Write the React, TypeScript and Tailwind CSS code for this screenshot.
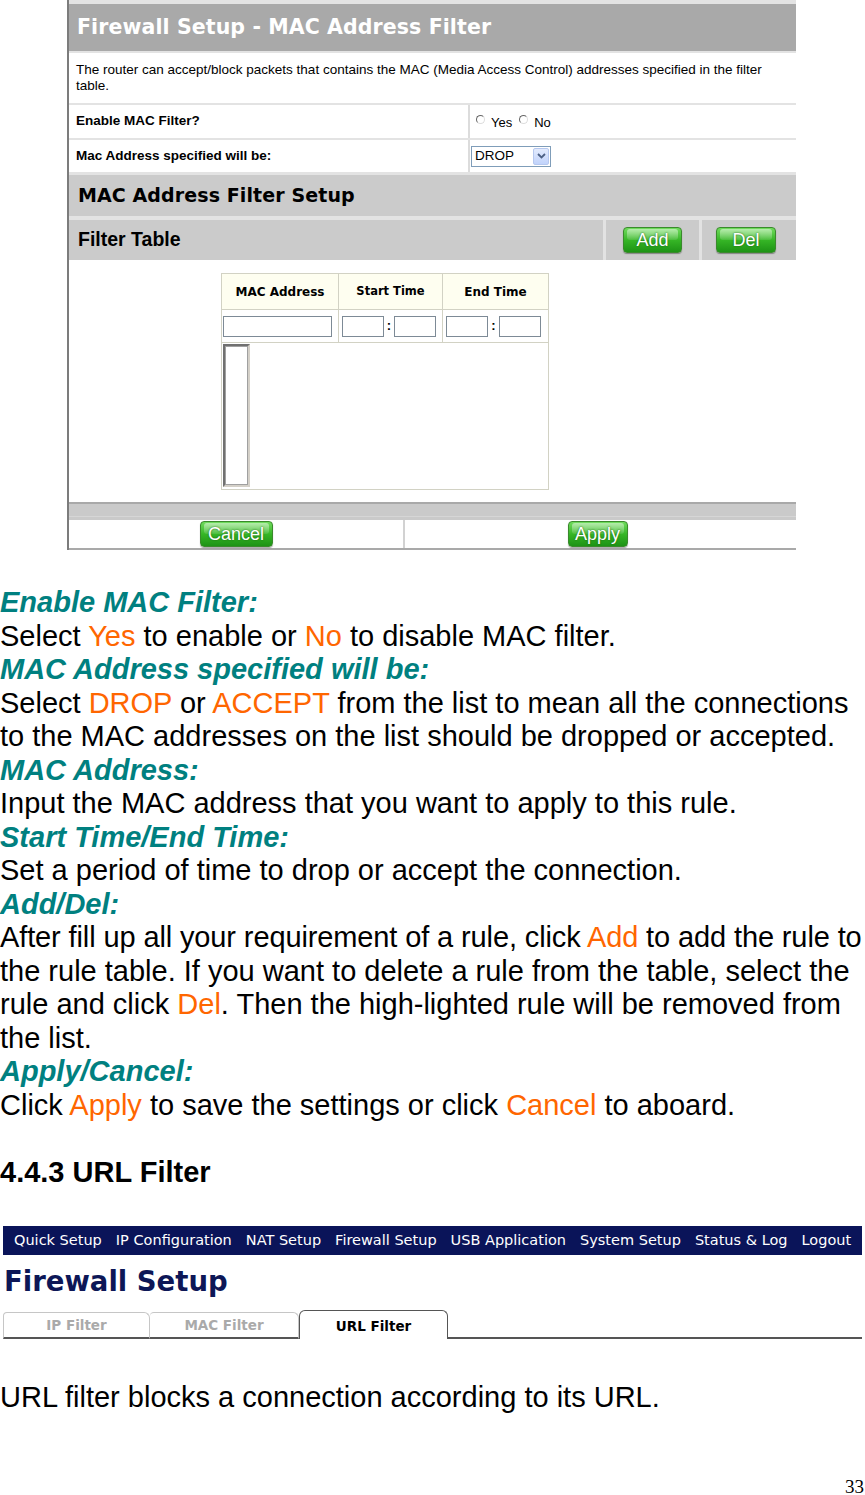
import React from 'react';

const sans = "font-['Liberation_Sans',Arial,sans-serif]";
const verdana = "font-['DejaVu_Sans',Verdana,sans-serif]";

function GreenButton({ label, width }: { label: string; width: string }) {
  return (
    <span
      className={`relative inline-flex h-[26px] ${width} items-center justify-center overflow-hidden rounded-[4px] border border-[#3a8a2c] bg-linear-to-b from-[#6fdc5c] via-[#36b626] to-[#1d9315] text-[18px] leading-none text-white shadow-[0_1px_1px_rgba(0,0,0,0.35)] [text-shadow:0_0_2px_#1b5e12] ${sans}`}
    >
      <span className="absolute left-[3px] right-[3px] top-[1px] h-[11px] rounded-[3px] bg-linear-to-b from-white/50 to-white/10" />
      <span className="relative">{label}</span>
    </span>
  );
}

function Radio({ label }: { label: string }) {
  return (
    <span className="inline-flex items-end">
      <span className="mb-[8px] inline-block h-[9px] w-[9px] rounded-full border border-l-[#666] border-t-[#666] border-r-[#ddd] border-b-[#ddd] bg-white" />
      <span className="ml-[6px] text-[13px] text-black">{label}</span>
    </span>
  );
}

function FilterScreenshot() {
  return (
    <div className={`ml-[67px] w-[729px] border-l-2 border-[#7c7c7c] bg-[#e3e3e3] pt-[4px] ${sans}`}>
      <div className="flex flex-col gap-[2px]">
        <div className="flex h-[47px] items-center bg-[#a9a9a9] pl-[8px]">
          <span className={`text-[20.5px] font-bold tracking-[0.1px] text-white ${verdana}`}>
            Firewall Setup - MAC Address Filter
          </span>
        </div>
        <div className="h-[50px] bg-white pl-[7px] pt-[9px] text-[13.5px] leading-[16px] text-black">
          The router can accept/block packets that contains the MAC (Media Access Control) addresses specified in the filter
          <br />
          table.
        </div>
        <div className="flex h-[33px] bg-white">
          <div className="flex w-[399px] items-center pl-[7px] text-[13.5px] font-bold text-black">Enable MAC Filter?</div>
          <div className="w-[2px] bg-[#dcdcdc]" />
          <div className="flex flex-1 items-center gap-[7px] pl-[6px] pt-[2px]">
            <Radio label="Yes" />
            <Radio label="No" />
          </div>
        </div>
        <div className="flex h-[32px] bg-white">
          <div className="flex w-[399px] items-center pl-[7px] text-[13.5px] font-bold text-black">
            Mac Address specified will be:
          </div>
          <div className="w-[2px] bg-[#dcdcdc]" />
          <div className="flex flex-1 items-center pl-[1px]">
            <div className="flex h-[21px] w-[80px] items-center justify-between border border-[#7f9db9] bg-white pl-[3px] pr-[1px] text-[13.5px] text-black">
              <span>DROP</span>
              <span className="flex h-[17px] w-[16px] items-center justify-center rounded-[2px] border border-[#b6c8ef] bg-linear-to-b from-[#e3ebfd] to-[#c1d3fb]">
                <svg width="9" height="6" viewBox="0 0 9 6">
                  <path d="M1 1 L4.5 4.5 L8 1" fill="none" stroke="#4d6185" strokeWidth="1.8" />
                </svg>
              </span>
            </div>
          </div>
        </div>
      </div>

      <div className="mt-[3px] flex h-[41px] items-center bg-[#cbcbcb] pl-[9px]">
        <span className={`text-[19px] font-bold tracking-[0.1px] text-black ${verdana}`}>MAC Address Filter Setup</span>
      </div>

      <div className="mt-[4px] flex h-[40px] bg-[#cbcbcb]">
        <div className="flex w-[534px] items-center pl-[9px] text-[19.5px] font-bold text-black">Filter Table</div>
        <div className="w-[3px] bg-[#e2e2e2]" />
        <div className="flex w-[93px] items-center justify-center">
          <GreenButton label="Add" width="w-[59px]" />
        </div>
        <div className="w-[3px] bg-[#e2e2e2]" />
        <div className="flex flex-1 items-center justify-center pr-[6px]">
          <GreenButton label="Del" width="w-[60px]" />
        </div>
      </div>

      <div className="h-[242px] bg-white pt-[13px]">
        <div className="ml-[152px] w-[328px] border border-[#d2d2c4]">
          <div className={`flex h-[35px] bg-[#fefef0] text-[12px] font-bold text-black ${verdana}`}>
            <div className="flex w-[117px] items-center justify-center border-r border-[#d2d2c4]">MAC Address</div>
            <div className="flex w-[104px] items-center justify-center border-r border-[#d2d2c4] text-[11.5px]">
              Start Time
            </div>
            <div className="flex flex-1 items-center justify-center">End Time</div>
          </div>
          <div className="flex h-[34px] border-t border-b border-[#d2d2c4] bg-white">
            <div className="flex w-[117px] items-center border-r border-[#d2d2c4] pl-[1px]">
              <span className="h-[21px] w-[109px] border border-[#7d8a96]" />
            </div>
            <div className="flex w-[104px] items-center border-r border-[#d2d2c4] pl-[3px]">
              <span className="h-[21px] w-[42px] border border-[#7d8a96]" />
              <span className="w-[10px] text-center text-[13px] font-bold text-black">:</span>
              <span className="h-[21px] w-[42px] border border-[#7d8a96]" />
            </div>
            <div className="flex flex-1 items-center pl-[3px]">
              <span className="h-[21px] w-[42px] border border-[#7d8a96]" />
              <span className="w-[11px] text-center text-[13px] font-bold text-black">:</span>
              <span className="h-[21px] w-[42px] border border-[#7d8a96]" />
            </div>
          </div>
          <div className="h-[146px] bg-white pl-[1px] pt-[1px]">
            <div className="h-[143px] w-[27px] border-2 border-l-[#707070] border-t-[#707070] border-r-[#d4d0c8] border-b-[#d4d0c8]">
              <div className="h-full w-full border border-[#a0a0a0]" />
            </div>
          </div>
        </div>
      </div>

      <div className="h-[18px] border-t-2 border-[#a9a9a9] bg-[#cacaca]">
        <div className="mt-[12px] h-px bg-[#d6d6d6]" />
      </div>
      <div className="flex h-[30px] border-b-2 border-[#a9a9a9] bg-white">
        <div className="flex w-[334px] items-center justify-center">
          <GreenButton label="Cancel" width="w-[73px]" />
        </div>
        <div className="w-[2px] bg-[#d2d2d2]" />
        <div className="flex flex-1 items-center justify-center pr-[6px]">
          <GreenButton label="Apply" width="w-[60px]" />
        </div>
      </div>
    </div>
  );
}

const Head = ({ children }: { children: React.ReactNode }) => (
  <div className="font-bold italic text-[#008080]">{children}</div>
);
const O = ({ children }: { children: React.ReactNode }) => <span className="text-[#ff6600]">{children}</span>;

function Docs() {
  return (
    <div className={`mt-[36px] whitespace-nowrap text-[29px] leading-[33.5px] text-black ${sans}`}>
      <Head>Enable MAC Filter:</Head>
      <div>
        Select <O>Yes</O> to enable or <O>No</O> to disable MAC filter.
      </div>
      <Head>MAC Address specified will be:</Head>
      <div>
        Select <O>DROP</O> or <O>ACCEPT</O> from the list to mean all the connections
      </div>
      <div>to the MAC addresses on the list should be dropped or accepted.</div>
      <Head>MAC Address:</Head>
      <div>Input the MAC address that you want to apply to this rule.</div>
      <Head>Start Time/End Time:</Head>
      <div>Set a period of time to drop or accept the connection.</div>
      <Head>Add/Del:</Head>
      <div className="tracking-[-0.12px]">
        After fill up all your requirement of a rule, click <O>Add</O> to add the rule to
      </div>
      <div>the rule table. If you want to delete a rule from the table, select the</div>
      <div>
        rule and click <O>Del</O>. Then the high-lighted rule will be removed from
      </div>
      <div>the list.</div>
      <Head>Apply/Cancel:</Head>
      <div>
        Click <O>Apply</O> to save the settings or click <O>Cancel</O> to aboard.
      </div>
      <div>&nbsp;</div>
      <div className="font-bold">4.4.3 URL Filter</div>
    </div>
  );
}

const navItems = [
  'Quick Setup',
  'IP Configuration',
  'NAT Setup',
  'Firewall Setup',
  'USB Application',
  'System Setup',
  'Status & Log',
  'Logout',
];

function UrlScreenshot() {
  return (
    <div className={`mt-[37px] px-[3px] ${verdana}`}>
      <div className="flex h-[29px] items-center gap-[14px] bg-[#0a1459] pl-[11px] text-[14.5px] text-white">
        {navItems.map((n) => (
          <span key={n}>{n}</span>
        ))}
      </div>
      <div className="mt-[9px] h-[35px] pl-[1px] text-[27.5px] font-bold leading-[35px] text-[#0d1757]">Firewall Setup</div>
      <div className="mt-[11px] flex h-[29px] items-end">
        <div className="flex h-[27px] w-[147px] items-center justify-center rounded-tl-[4px] rounded-tr-[6px] border border-b-2 border-[#c6c6c6] border-b-[#555] text-[13.5px] font-bold text-[#aaaaaa]">
          IP Filter
        </div>
        <div className="flex h-[27px] w-[149px] items-center justify-center rounded-tl-[4px] rounded-tr-[6px] border border-l-0 border-b-2 border-[#c6c6c6] border-b-[#555] text-[13.5px] font-bold text-[#aaaaaa]">
          MAC Filter
        </div>
        <div className="flex h-[29px] w-[149px] items-center justify-center rounded-t-[6px] border border-b-0 border-[#555] bg-white pt-[2px] text-[13.5px] font-bold text-black">
          URL Filter
        </div>
        <div className="h-[2px] flex-1 bg-[#555]" />
      </div>
    </div>
  );
}

export default function App() {
  return (
    <div className="relative h-[1495px] w-[865px] overflow-hidden bg-white">
      <FilterScreenshot />
      <Docs />
      <UrlScreenshot />
      <div className={`mt-[42px] text-[29px] leading-[33.5px] text-black ${sans}`}>
        URL filter blocks a connection according to its URL.
      </div>
      <div className="mt-[61px] pr-[1px] text-right font-['Liberation_Serif',serif] text-[19px] leading-[22px] text-black">
        33
      </div>
    </div>
  );
}
